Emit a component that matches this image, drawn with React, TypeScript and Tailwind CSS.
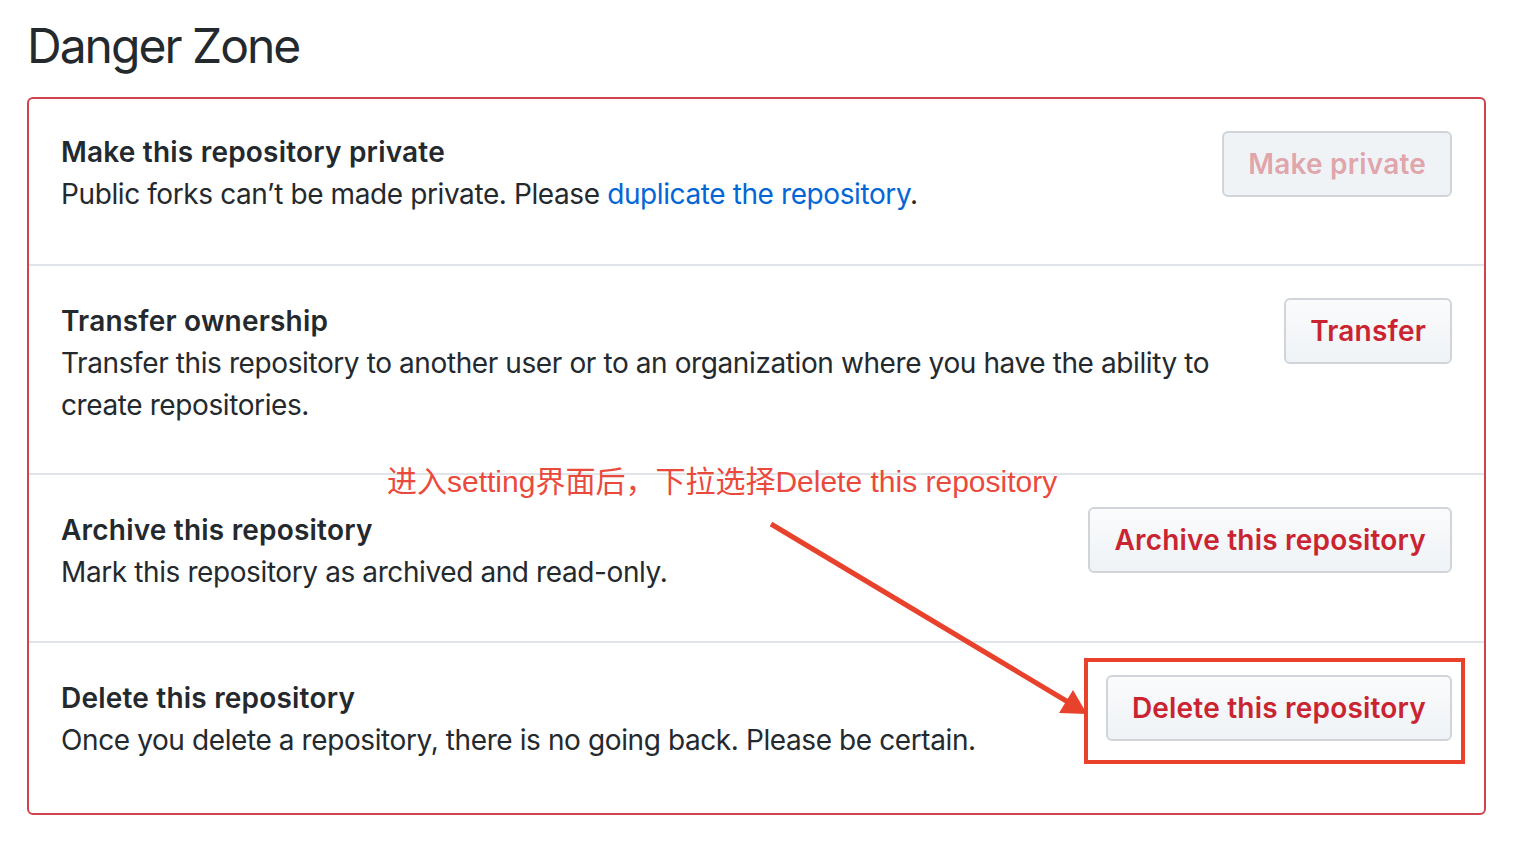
import React from 'react';

type Row = {
  title: string;
  desc: React.ReactNode;
  button: string;
  disabled?: boolean;
};

const rows: Row[] = [
  {
    title: 'Make this repository private',
    desc: (
      <>
        Public forks can’t be made private. Please{' '}
        <a href="#" className="text-[#0366d6]">
          duplicate the repository
        </a>
        .
      </>
    ),
    button: 'Make private',
    disabled: true,
  },
  {
    title: 'Transfer ownership',
    desc: 'Transfer this repository to another user or to an organization where you have the ability to create repositories.',
    button: 'Transfer',
  },
  {
    title: 'Archive this repository',
    desc: 'Mark this repository as archived and read-only.',
    button: 'Archive this repository',
  },
  {
    title: 'Delete this repository',
    desc: 'Once you delete a repository, there is no going back. Please be certain.',
    button: 'Delete this repository',
  },
];

// bottom padding per row, tuned to the screenshot
const rowPad = ['pt-[32px] pb-[49px]', 'pt-[32px] pb-[47px]', 'pt-[32px] pb-[48px]', 'pt-[32px] pb-[52px]'];

const App: React.FC = () => {
  return (
    <div
      className="relative min-h-screen bg-white px-[27px] pt-[16px] text-[#24292e]"
      style={{ fontFamily: 'Inter, "Noto Sans", sans-serif' }}
    >
      <h2 className="text-[48px] leading-[60px] font-normal tracking-[-2px]">Danger Zone</h2>

      <div className="mt-[21px] w-[1459px] rounded-[6px] border-2 border-[#d0424c]">
        {rows.map((row, i) => (
          <div
            key={row.title}
            className={`flex items-start justify-between gap-[40px] px-[32px] ${rowPad[i]} ${
              i > 0 ? 'border-t-2 border-[#e1e4e8]' : ''
            }`}
          >
            <div className={`flex-1 ${i > 0 ? 'mt-[2px]' : ''}`}>
              <div className="text-[28px] leading-[42px] font-semibold tracking-[0.2px]">{row.title}</div>
              <p className="text-[28px] leading-[42px] tracking-[-0.4px]">{row.desc}</p>
            </div>
            {row.disabled ? (
              <button className="h-[66px] shrink-0 rounded-[6px] border-2 border-[#d1d5da] bg-[#eff3f6] px-[24px] text-[28px] font-semibold tracking-[0.2px] text-[#cb2431]/40">
                {row.button}
              </button>
            ) : (
              <button className="h-[66px] shrink-0 rounded-[6px] border-2 border-[#d1d5da] bg-linear-to-b from-[#fafbfc] to-[#eff3f6] px-[24px] text-[28px] font-semibold tracking-[0.2px] text-[#cb2431]">
                {row.button}
              </button>
            )}
          </div>
        ))}
      </div>

      {/* annotation layer */}
      <div
        className="absolute left-[387px] top-[463px] text-[30px] leading-[38px] text-[#ea4a3c]"
        style={{ fontFamily: '"Liberation Sans", "Noto Sans CJK SC", sans-serif' }}
      >
        进入setting界面后，下拉选择Delete this repository
      </div>
      <svg
        className="pointer-events-none absolute left-0 top-0"
        width="1516"
        height="846"
        viewBox="0 0 1516 846"
      >
        <line x1="771" y1="524" x2="1068" y2="702" stroke="#e8412c" strokeWidth="5" />
        <polygon points="1073,690 1059,713 1087,714" fill="#e8412c" />
      </svg>
      <div className="absolute left-[1084px] top-[658px] h-[106px] w-[381px] border-4 border-[#e8412c]" />
    </div>
  );
};

export default App;
